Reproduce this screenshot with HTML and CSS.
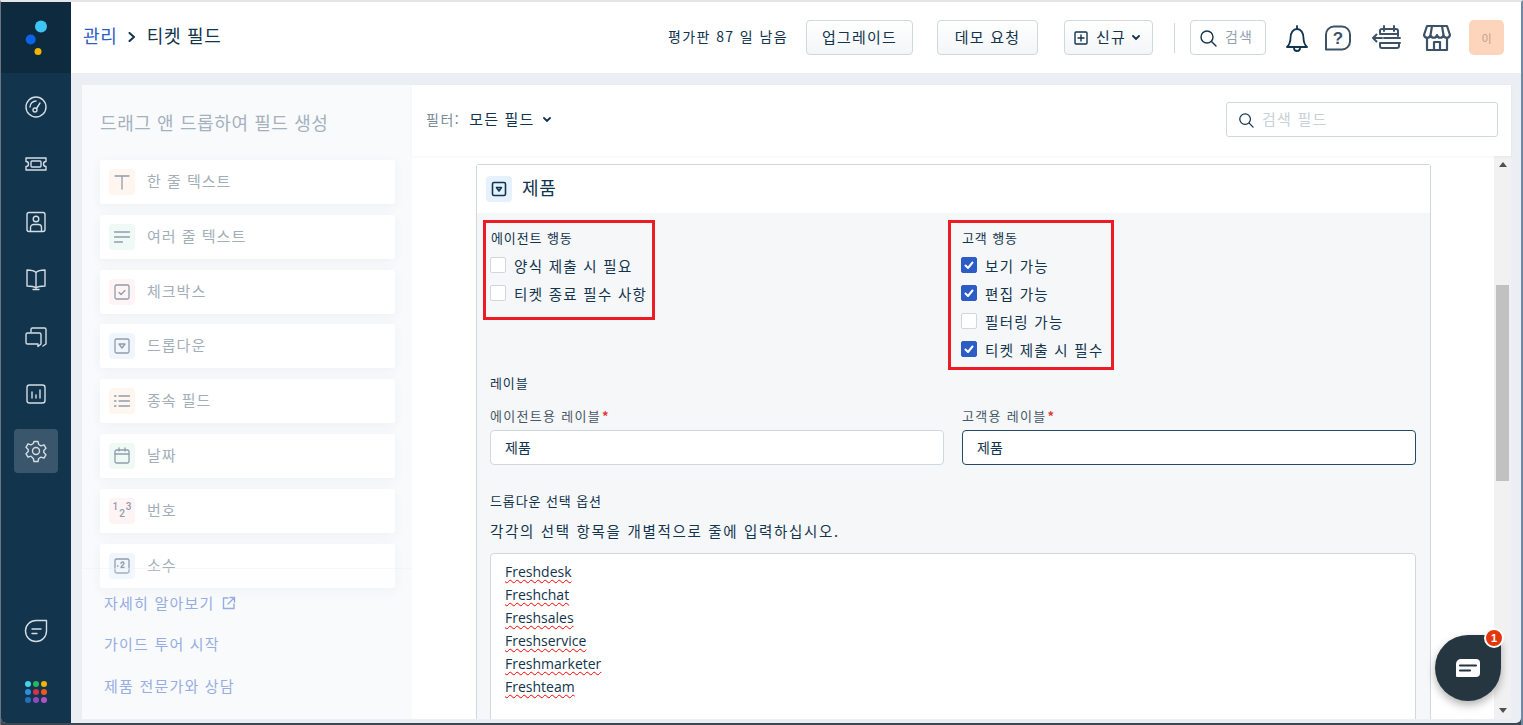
FILE: index.html
```html
<!DOCTYPE html>
<html lang="ko">
<head>
<meta charset="utf-8">
<title>티켓 필드</title>
<link rel="stylesheet" href="styles.css">
</head>
<body>
<div class="app">
  <nav class="rail">
    <div class="rail-logo">
      <svg width="40" height="40" viewBox="0 0 40 40"><circle cx="25" cy="8.500" r="6" fill="#3fc5f5"/><circle cx="14.700" cy="21.500" r="5" fill="#0c63e7"/><circle cx="22" cy="33.500" r="3.500" fill="#f5b400"/></svg>
    </div>
    <div class="rail-items">
      <a class="rail-item"><svg viewBox="0 0 24 24" class="ri"><circle cx="12" cy="12" r="10"/><circle cx="11" cy="15" r="2"/><path d="M12.500 13.500 16 8M6 12a6 6 0 0 1 6-6"/></svg></a>
      <a class="rail-item"><svg viewBox="0 0 24 24" class="ri"><path d="M2 6h20v3.500a2.500 2.500 0 0 0 0 5V18H2v-3.500a2.500 2.500 0 0 0 0-5z"/><rect x="7" y="9" width="10" height="6" rx="1"/></svg></a>
      <a class="rail-item"><svg viewBox="0 0 24 24" class="ri"><rect x="3" y="2.500" width="18" height="19" rx="2"/><circle cx="12" cy="9" r="2.800"/><path d="M6.500 21v-3.500a3 3 0 0 1 3-3h5a3 3 0 0 1 3 3V21"/></svg></a>
      <a class="rail-item"><svg viewBox="0 0 24 24" class="ri"><path d="M12 5.500C10 3.500 7 3 3 3v16c4 0 7 .3 9 2 2-1.700 5-2 9-2V3c-4 0-7 .5-9 2.500zM12 5.500V21M9 22.500h6"/></svg></a>
      <a class="rail-item"><svg viewBox="0 0 24 24" class="ri"><path d="M7 7V4.500A1.500 1.500 0 0 1 8.500 3h12A1.500 1.500 0 0 1 22 4.500V19l-3 2"/><path d="M3.500 8h12A1.500 1.500 0 0 1 17 9.500V19l-3 2.500V19H3.500A1.500 1.500 0 0 1 2 17.500v-8A1.500 1.500 0 0 1 3.500 8z"/></svg></a>
      <a class="rail-item"><svg viewBox="0 0 24 24" class="ri"><rect x="3" y="3" width="18" height="18" rx="2.500"/><path d="M8 10v6M12 13v3M16 8v8"/></svg></a>
      <a class="rail-item active"><svg viewBox="0 0 24 24" class="ri"><path d="M10 2.500h4l.7 3 2.300 1.300 3-1 2 3.500-2.200 2.100v2.200l2.200 2.100-2 3.500-3-1-2.300 1.300-.7 3h-4l-.7-3L7 17.200l-3 1-2-3.500 2.200-2.100v-2.200L2 8.300l2-3.500 3 1 2.300-1.300z"/><circle cx="12" cy="12" r="3.500"/></svg></a>
    </div>
    <div class="rail-bottom">
      <a class="rail-item"><svg viewBox="0 0 24 24" class="ri"><path d="M12 1.500h10.500V12A10.500 10.500 0 1 1 12 1.500zM8 10h9M8 14.500h5"/></svg></a>
      <div class="apps">
        <i style="background:#3ed8e8"></i><i style="background:#2cb35f"></i><i style="background:#f5b400"></i>
        <i style="background:#2a8fe0"></i><i style="background:#d8304a"></i><i style="background:#ee5a1e"></i>
        <i style="background:#2470b8"></i><i style="background:#8e4bbd"></i><i style="background:#b64fc8"></i>
      </div>
    </div>
  </nav>

  <div class="main">
    <header class="topbar">
      <div class="crumbs"><a class="crumb-link">관리</a><svg class="crumb-sep" width="8" height="10" viewBox="0 0 8 10"><path d="M1.500 1 6 5 1.500 9"/></svg><span class="crumb-now">티켓 필드</span></div>
      <div class="top-actions">
        <span class="trial">평가판 87 일 남음</span>
        <button class="btn btn-up"><span class="btn-t">업그레이드</span></button>
        <button class="btn btn-demo"><span class="btn-t">데모 요청</span></button>
        <button class="btn btn-new"><svg width="14" height="14" viewBox="0 0 14 14" class="plus"><rect x="1" y="1" width="12" height="12" rx="1"/><path d="M7 4v6M4 7h6"/></svg><span class="btn-t">신규</span><svg width="8" height="6" viewBox="0 0 8 6" class="caret"><path d="M1 1l3 3 3-3"/></svg></button>
        <span class="divider"></span>
        <div class="top-search"><svg width="18" height="18" viewBox="0 0 18 18" class="mag"><circle cx="8" cy="8" r="6"/><path d="M12.500 12.500 17 17"/></svg><span>검색</span></div>
        <svg class="ticon bell" width="24" height="28" viewBox="0 0 24 28"><path d="M2 23c2-2 3.500-4 3.500-9 0-5 2.500-9 6.500-9s6.500 4 6.500 9c0 5 1.500 7 3.500 9zM12 2v3"/><path d="M9 24a3 3 0 0 0 6 0"/></svg>
        <svg class="ticon help" width="28" height="26" viewBox="0 0 28 26"><path d="M10 1.500h8a8 8 0 0 1 8 8v7a8 8 0 0 1-8 8H2v-15a8 8 0 0 1 8-8z"/><text x="14" y="19" text-anchor="middle" class="qm">?</text></svg>
        <svg class="ticon cal" width="30" height="26" viewBox="0 0 30 26"><path d="M8 8V6a2 2 0 0 1 2-2h14a2 2 0 0 1 2 2v5M12 1v5M22 1v5M8 9h18M12 13h16M8 18h20M8 18v3a2 2 0 0 0 2 2h15a2 2 0 0 0 2-2v-3M1 13h9M4.500 9.500 1 13l3.500 3.500"/></svg>
        <svg class="ticon store" width="30" height="28" viewBox="0 0 30 28"><path d="M5 2h20l3 9a3.300 3.300 0 0 1-6.500 0 3.300 3.300 0 0 1-6.500 0 3.300 3.300 0 0 1-6.500 0A3.300 3.300 0 0 1 2 11zM5 14v12h20V14M12 26v-8h6v8M10 2 8.500 11M20 2l1.500 9"/></svg>
        <span class="avatar">이</span>
      </div>
    </header>

    <div class="workspace">
      <aside class="palette">
        <h2 class="palette-title">드래그 앤 드롭하여 필드 생성</h2>
        <ul class="palette-list">
          <li class="pitem"><span class="pico orange"><svg viewBox="0 0 18 18" class="pi"><path d="M2 3h14M9 3v13"/></svg></span>한 줄 텍스트</li>
          <li class="pitem"><span class="pico green"><svg viewBox="0 0 18 18" class="pi"><path d="M1.500 4h15M1.500 9h15M1.500 14h8"/></svg></span>여러 줄 텍스트</li>
          <li class="pitem"><span class="pico pink"><svg viewBox="0 0 18 18" class="pi"><rect x="2" y="2" width="14" height="14" rx="1.500"/><path d="M6 9.500l2 2 4-4"/></svg></span>체크박스</li>
          <li class="pitem"><span class="pico blue"><svg viewBox="0 0 18 18" class="pi"><rect x="2" y="2" width="14" height="14" rx="1.500"/><path d="M6 7h6l-3 4z"/></svg></span>드롭다운</li>
          <li class="pitem"><span class="pico orange"><svg viewBox="0 0 18 18" class="pi"><path d="M1.500 4h1.500M6 4h10.500M1.500 9h1.500M6 9h10.500M1.500 14h1.500M6 14h10.500"/></svg></span>종속 필드</li>
          <li class="pitem"><span class="pico green"><svg viewBox="0 0 18 18" class="pi"><rect x="2" y="3" width="14" height="13" rx="1.500"/><path d="M2 7h14M6 1v3M12 1v3"/></svg></span>날짜</li>
          <li class="pitem"><span class="pico pink"><span class="nums"><b>1</b><b class="n2">2</b><b>3</b></span></span>번호</li>
          <li class="pitem"><span class="pico blue"><svg viewBox="0 0 18 18" class="pi"><path d="M2 5V3.500A1.500 1.500 0 0 1 3.500 2h11A1.500 1.500 0 0 1 16 3.500V5M2 13v1.500A1.500 1.500 0 0 0 3.500 16h11a1.500 1.500 0 0 0 1.500-1.500V13M2 6v6M16 6v6"/><path d="M8 6.500a1.500 1.500 0 0 1 3 0c0 1.500-3 2-3 4h3M4.500 9h.5"/></svg></span>소수</li>
        </ul>
        <div class="palette-foot">
          <a class="foot-link">자세히 알아보기 <svg width="14" height="14" viewBox="0 0 14 14" class="ext"><path d="M6 2H1.500v10.500H12V8M8 1.500h4.500V6M12.500 1.500 6 8"/></svg></a>
          <a class="foot-link">가이드 투어 시작</a>
          <a class="foot-link">제품 전문가와 상담</a>
        </div>
      </aside>

      <section class="editor">
        <div class="filterbar">
          <div class="filter"><span class="filter-k">필터:</span><span class="filter-v">모든 필드</span><svg width="8" height="6" viewBox="0 0 8 6" class="caret"><path d="M1 1l3 3 3-3"/></svg></div>
          <div class="field-search"><svg width="16" height="16" viewBox="0 0 18 18" class="mag"><circle cx="8" cy="8" r="6"/><path d="M12.500 12.500 17 17"/></svg><span>검색 필드</span></div>
        </div>
        <div class="scroller">
          <div class="scroll-body">
            <div class="card">
              <div class="card-head"><span class="card-ico"><svg viewBox="0 0 18 18" width="18" height="18" class="pi dark"><rect x="2.500" y="2.500" width="13" height="13" rx="1.500"/><path d="M6.500 7.500h5L9 11z"/></svg></span><span class="card-title">제품</span></div>
              <div class="card-body">
                <div class="two-col perms">
                  <div class="box box-agent">
                    <div class="group-label">에이전트 행동</div>
                    <label class="chk"><span class="cb"></span>양식 제출 시 필요</label>
                    <label class="chk"><span class="cb"></span>티켓 종료 필수 사항</label>
                  </div>
                  <div class="box box-cust">
                    <div class="group-label">고객 행동</div>
                    <label class="chk"><span class="cb on"><svg viewBox="0 0 12 12" width="12" height="12"><path d="M2.500 6.500 5 9l4.500-5.500"/></svg></span>보기 가능</label>
                    <label class="chk"><span class="cb on"><svg viewBox="0 0 12 12" width="12" height="12"><path d="M2.500 6.500 5 9l4.500-5.500"/></svg></span>편집 가능</label>
                    <label class="chk"><span class="cb"></span>필터링 가능</label>
                    <label class="chk"><span class="cb on"><svg viewBox="0 0 12 12" width="12" height="12"><path d="M2.500 6.500 5 9l4.500-5.500"/></svg></span>티켓 제출 시 필수</label>
                  </div>
                </div>
                <div class="section-label">레이블</div>
                <div class="two-col labels">
                  <div><div class="flabel">에이전트용 레이블<span class="req">*</span></div><div class="input">제품</div></div>
                  <div><div class="flabel">고객용 레이블<span class="req">*</span></div><div class="input focus">제품</div></div>
                </div>
                <div class="opt-label">드롭다운 선택 옵션</div>
                <p class="opt-help">각각의 선택 항목을 개별적으로 줄에 입력하십시오.</p>
                <div class="textarea">
                  <span class="sp">Freshdesk</span>
                  <span class="sp">Freshchat</span>
                  <span class="sp">Freshsales</span>
                  <span class="sp">Freshservice</span>
                  <span class="sp">Freshmarketer</span>
                  <span class="sp">Freshteam</span>
                </div>
              </div>
            </div>
          </div>
          <div class="scrollbar"><span class="arrow up"></span><span class="track"><span class="thumb"></span></span><span class="arrow down"></span></div>
        </div>
      </section>
    </div>
  </div>
</div>
<div class="chat">
  <svg width="26" height="20" viewBox="0 0 26 20"><path d="M6 1h15a4 4 0 0 1 4 4v10a4 4 0 0 1-4 4H2a1 1 0 0 1-1-1V6a5 5 0 0 1 5-5z" fill="#fff"/><path d="M5 7.500h16M5 12.500h10" stroke="#263640" stroke-width="2.200" stroke-linecap="round"/></svg>
  <span class="chat-badge">1</span>
</div>
</body>
</html>
```
FILE: styles.css
```css
* { box-sizing: border-box; }
html, body { margin: 0; height: 100%; overflow: hidden; }
body {
  width: 1523px; height: 725px; background: #3c4650; padding: 0 0 2px 0;
  border-top: 2px solid #e3e5e7; border-left: 1px solid #6b7480; border-right: 2px solid #6f8aa5;
  font-family: "Noto Sans CJK KR", "Noto Sans", sans-serif; color: #12344d; font-size: 14px;
  position: relative;
}
.app { display: flex; width: 1520px; height: 721px; background: #ebeff3; overflow: hidden; border-radius: 0 0 5px 5px; }
.rail { width: 70px; flex: none; background: #12344d; display: flex; flex-direction: column; align-items: center; }
.rail-logo { width: 100%; height: 71px; background: #0d2a3f; display: flex; align-items: center; justify-content: center; }
.rail-items { padding-top: 12px; display: flex; flex-direction: column; gap: 13.400px; }
.rail-item { width: 44px; height: 44px; border-radius: 4px; display: flex; align-items: center; justify-content: center; }
.rail-item.active { background: #3a566c; }
.ri { width: 24px; height: 24px; fill: none; stroke: #d5dde3; stroke-width: 1.400; stroke-linecap: round; stroke-linejoin: round; }
.rail-bottom { margin-top: auto; padding-bottom: 20px; display: flex; flex-direction: column; align-items: center; gap: 28px; }
.apps { width: 22px; display: grid; grid-template-columns: repeat(3, 6px); gap: 2px; }
.apps i { width: 6px; height: 6px; border-radius: 50%; display: block; }

.main { flex: 1; display: flex; flex-direction: column; min-width: 0; }
.topbar { height: 71px; background: #fff; display: flex; align-items: center; justify-content: space-between; padding: 0 17px 0 12px; flex: none; }
.crumbs { display: flex; align-items: center; font-size: 18px; letter-spacing: .8px; margin-top: -5px; }
.crumb-link { color: #2c5cc5; }
.crumb-sep { margin: 3px 11px 0 10px; fill: none; stroke: #12344d; stroke-width: 2; stroke-linecap: round; stroke-linejoin: round; }
.crumb-now { color: #12344d; letter-spacing: .7px; }
.top-actions { display: flex; align-items: center; }
.trial { font-size: 14px; letter-spacing: 1.400px; margin-right: 18px; margin-top: -3px; color: #12344d; white-space: nowrap; }
.btn { height: 35px; border: 1px solid #cfd7df; border-radius: 4px; background: linear-gradient(#fff, #f3f5f7); color: #12344d; font: inherit; padding: 0; display: flex; align-items: center; justify-content: center; }
.btn-t { font-size: 15px; letter-spacing: 1.200px; margin-top: -3px; white-space: nowrap; }
.btn-up { width: 107px; margin-right: 24px; }
.btn-demo { width: 101px; margin-right: 26px; }
.btn-new { width: 89px; gap: 8px; justify-content: flex-start; padding-left: 9px; }
.plus, .caret, .mag, .ext { fill: none; stroke: #12344d; stroke-width: 1.400; stroke-linecap: round; }
.caret { stroke-width: 1.800; margin-left: -2px; }
.divider { width: 1px; height: 30px; background: #cfd7df; margin: 0 15px 0 21px; }
.top-search { width: 76px; height: 35px; border: 1px solid #cfd7df; border-radius: 4px; display: flex; align-items: center; gap: 8px; padding-left: 8px; color: #92a2b1; margin-right: 19px; white-space: nowrap; letter-spacing: 1.200px; }
.top-search span { margin-top: -3px; }
.ticon { fill: none; stroke: #12344d; stroke-width: 1.800; stroke-linecap: round; stroke-linejoin: round; flex: none; }
.bell { margin-right: 14px; }
.help { stroke: #3d5266; stroke-width: 2; margin-right: 20px; margin-left: 1px; }
.help .qm { stroke: none; fill: #3d5266; font: 700 17px "Liberation Sans", sans-serif; }
.cal { stroke: #3d5266; stroke-width: 2; margin-right: 20px; }
.store { stroke: #3d5266; stroke-width: 2.200; margin-right: 17px; }
.avatar { width: 35px; height: 35px; border-radius: 5px; background: #fdd5bd; color: #c59c8a; font-size: 11px; display: flex; align-items: center; justify-content: center; }

.workspace { flex: 1; display: flex; margin: 12px 10px 4px 11px; min-height: 0; }
.palette { width: 330px; flex: none; background: #f9fafc; padding: 0 17px 0 18px; display: flex; flex-direction: column; position: relative; }
.palette-title { font-size: 18px; font-weight: 400; color: #a5b1bc; margin: 24px 0 25px; line-height: 26px; letter-spacing: .6px; white-space: nowrap; }
.palette-list { list-style: none; margin: 0; padding: 0; display: flex; flex-direction: column; gap: 10.800px; }
.pitem { height: 44px; background: #fff; border-radius: 3px; display: flex; align-items: center; gap: 12px; padding: 0 0 3px 9px; color: #a2aeb9; font-size: 15px; letter-spacing: 1px; box-shadow: 0 3px 12px rgba(18,52,77,.05); }
.pico { width: 26px; height: 26px; border-radius: 4px; display: flex; align-items: center; justify-content: center; flex: none; margin-top: 3px; }
.orange { background: #fef6ef; } .green { background: #eff9f6; } .pink { background: #fef4f5; } .blue { background: #f1f6fe; }
.pi { width: 18px; height: 18px; fill: none; stroke: #8f9daa; stroke-width: 1.300; stroke-linecap: round; stroke-linejoin: round; }
.pi.dark { stroke: #12344d; stroke-width: 1.600; }
.nums { display: flex; font: 400 10px/1 "Roboto", sans-serif; color: #8f9daa; letter-spacing: 0; gap: 1px; }
.nums b { font-weight: 500; } .nums .n2 { margin-top: 7px; }
.palette-foot { margin: -20px -17px 0 -18px; padding: 24px 0 0 22px; flex: 1; background: rgba(249,250,252,.2); border-top: 1px solid rgba(235,238,241,.4); display: flex; flex-direction: column; gap: 21.500px; position: relative; }
.foot-link { color: #96ade3; font-size: 15px; line-height: 20px; letter-spacing: 1.200px; }
.ext { stroke: #96ade3; vertical-align: -1px; margin-left: 2px; }

.editor { width: 1099px; flex: none; min-width: 0; display: flex; flex-direction: column; }
.filterbar { height: 71px; background: #fff; display: flex; align-items: center; justify-content: space-between; padding: 0 13px 0 14px; flex: none; box-shadow: 0 1px 3px rgba(18,52,77,.05); position: relative; }
.filter { display: flex; align-items: center; gap: 9px; margin-top: -4px; }
.filter-k { color: #7a8a99; letter-spacing: 1.500px; }
.filter-v { color: #12344d; font-size: 15px; letter-spacing: 1.200px; }
.filter .caret { margin-left: -1px; margin-top: 3px; }
.field-search { width: 272px; height: 35px; border: 1px solid #cfd7df; border-radius: 3px; display: flex; align-items: center; gap: 8px; padding-left: 11px; color: #c9d1d9; background: #fff; font-size: 15px; letter-spacing: 1.200px; margin-top: -2px; }
.field-search span { margin-top: -3px; }
.scroller { flex: 1; min-height: 0; display: flex; }
.scroll-body { width: 1082px; background: #fff; padding: 8px 0 0 64px; overflow: hidden; flex: none; border-right: 0; }
.scrollbar { width: 17px; background: #f1f1f1; display: flex; flex-direction: column; align-items: center; flex: none; }
.arrow { width: 0; height: 0; border-left: 4px solid transparent; border-right: 4px solid transparent; margin: 6px 0; flex: none; }
.arrow.up { border-bottom: 5px solid #505050; }
.arrow.down { border-top: 5px solid #505050; }
.track { flex: 1; width: 100%; padding: 112px 2px 0; }
.thumb { display: block; width: 100%; height: 196px; background: #c1c1c1; }

.card { width: 955px; border: 1px solid #cfd7df; border-bottom: 0; border-radius: 3px 3px 0 0; background: #f5f7f9; height: 700px; }
.card-head { height: 48px; background: #fff; display: flex; align-items: center; gap: 10px; padding-left: 9px; }
.card-ico { width: 26px; height: 26px; background: #e5f2fd; border-radius: 4px; display: flex; align-items: center; justify-content: center; }
.card-title { font-size: 18px; letter-spacing: .8px; color: #12344d; padding-bottom: 4px; }
.card-body { padding: 7px 14px 0 13px; }
.two-col { display: grid; grid-template-columns: 454px 454px; column-gap: 18px; }
.perms { height: 153px; align-items: start; }
.box { border: 3px solid #ed1c24; display: flex; flex-direction: column; }
.box-agent { width: 172px; height: 100px; margin-left: -7px; padding: 5px 0 0 4px; }
.box-cust { width: 166px; height: 150px; margin-left: -14px; padding: 5px 0 0 10px; }
.group-label { font-size: 13px; letter-spacing: .9px; line-height: 20px; margin: 0 0 3px 1px; color: #12344d; white-space: nowrap; }
.chk { height: 28px; display: flex; align-items: center; gap: 8px; font-size: 14.500px; letter-spacing: 1.300px; color: #12344d; white-space: nowrap; }
.cb { width: 16px; height: 16px; border: 1px solid #cfd7df; border-radius: 2px; background: #fff; flex: none; display: flex; align-items: center; justify-content: center; }
.cb.on { background: #2c5cc5; border-color: #2c5cc5; }
.cb svg { fill: none; stroke: #fff; stroke-width: 2; stroke-linecap: round; stroke-linejoin: round; }
.section-label { font-size: 13px; letter-spacing: .9px; line-height: 20px; margin-bottom: 13px; color: #12344d; }
.flabel { font-size: 13px; letter-spacing: 1.300px; line-height: 20px; margin-bottom: 4px; color: #475867; }
.req { color: #e43538; font-weight: 700; margin-left: 1px; }
.input { height: 35px; background: #fff; border: 1px solid #cfd7df; border-radius: 4px; padding: 0 14px; line-height: 33px; font-size: 14px; color: #12344d; }
.input.focus { border-color: #264966; }
.opt-label { font-size: 13px; letter-spacing: .9px; line-height: 20px; margin-top: 26px; color: #12344d; }
.opt-help { margin: 10px 0 0; line-height: 20px; font-size: 14.500px; letter-spacing: 1.680px; color: #12344d; white-space: nowrap; }
.textarea { margin-top: 12px; width: 926px; height: 260px; background: #fff; border: 1px solid #cfd7df; border-radius: 4px; padding: 6px 14px; display: flex; flex-direction: column; align-items: flex-start; }
.sp { font-family: "Open Sans", sans-serif; font-size: 14px; line-height: 23px; color: #12344d; text-decoration: underline wavy #f00 1px; text-underline-offset: 2px; }

.chat { position: absolute; left: 1434px; top: 633px; width: 66px; height: 66px; border-radius: 33px; background: #263640; border-top-right-radius: 8px; box-shadow: 0 4px 8px rgba(0,0,0,.3); display: flex; align-items: center; justify-content: center; }
.chat-badge { position: absolute; left: 49px; top: -7px; width: 20px; height: 20px; border: 2px solid #fff; border-radius: 50%; background: #e4360a; color: #fff; font: 700 11px/16px "Liberation Sans", sans-serif; text-align: center; }
```
